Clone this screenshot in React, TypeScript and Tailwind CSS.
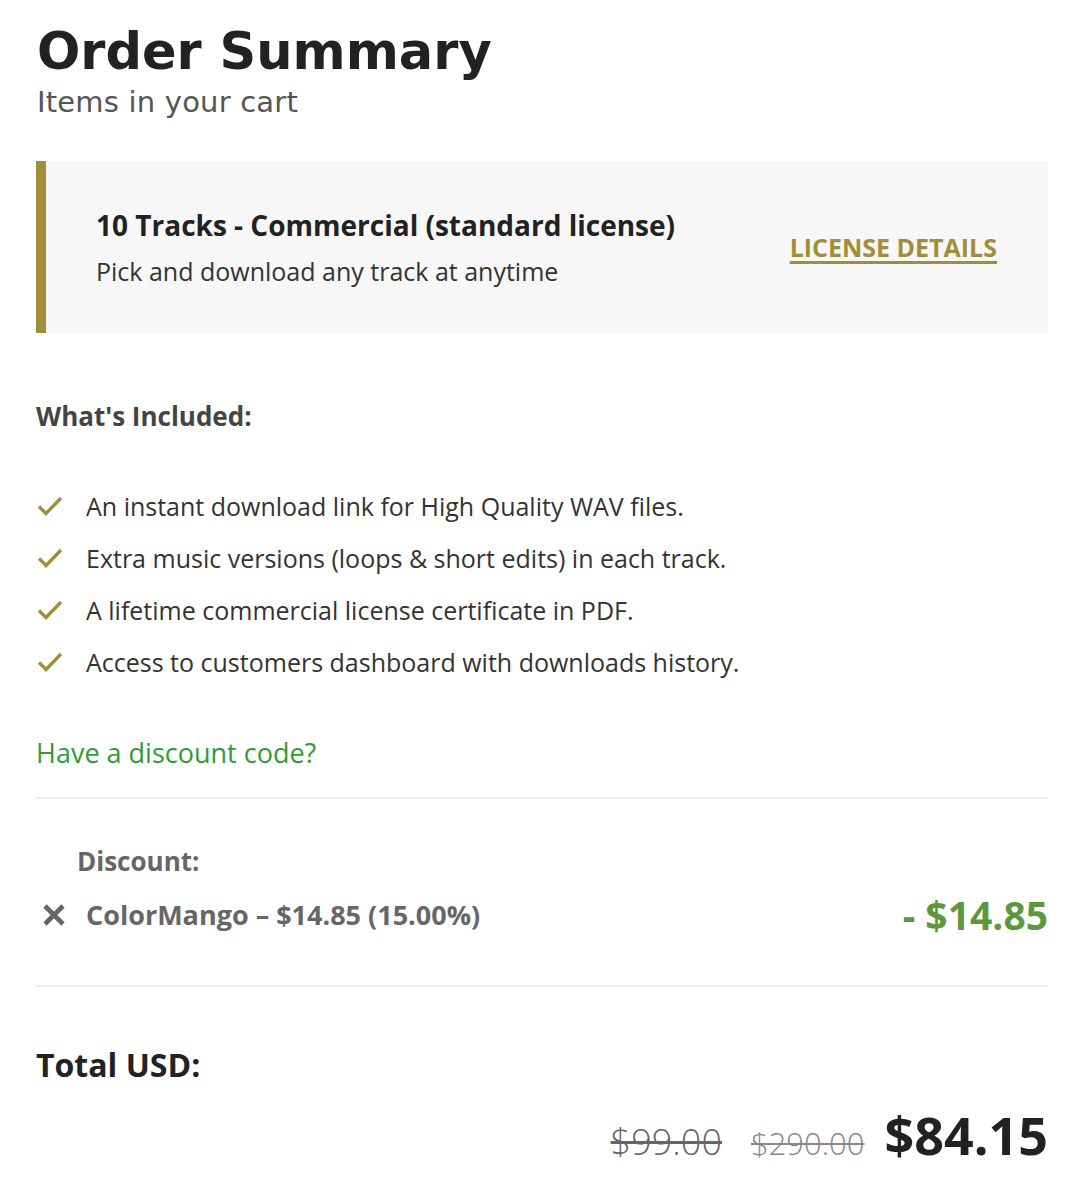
import React from 'react';

const features = [
    'An instant download link for High Quality WAV files.',
    'Extra music versions (loops & short edits) in each track.',
    'A lifetime commercial license certificate in PDF.',
    'Access to customers dashboard with downloads history.',
];

const Check = () => (
    <svg width="26" height="22" viewBox="0 0 26 22" fill="none" className="shrink-0">
        <path d="M2 11.5l7 7L24 3" stroke="#a08f3a" strokeWidth="3.4" strokeLinecap="butt" strokeLinejoin="miter" />
    </svg>
);

const Cross = () => (
    <svg width="24" height="24" viewBox="0 0 24 24" fill="none" className="shrink-0">
        <path d="M3 3l18 18M21 3L3 21" stroke="#666" strokeWidth="4.6" />
    </svg>
);

export default function App() {
    return (
        <div className="w-full bg-white text-[#222] pl-[36px] pr-[38px] pt-[22px] pb-10 font-['Open_Sans',sans-serif]">
            <div className="pl-[1px]">
                <h1 className="font-['DejaVu_Sans',sans-serif] font-bold text-[51px] leading-[60px] text-[#222]">Order Summary</h1>
                <p className="font-['DejaVu_Sans',sans-serif] text-[29px] leading-[36px] tracking-[0.2px] text-[#555] mt-[2px]">Items in your cart</p>
            </div>

            <div className="mt-[41px] h-[172px] bg-[#f7f7f7] border-l-[10px] border-[#a08f3a] flex items-center justify-between pl-[50px] pr-[51px]">
                <div className="flex flex-col">
                    <span className="font-bold text-[28px] leading-[36px] text-[#222]">10 Tracks - Commercial (standard license)</span>
                    <span className="text-[25px] leading-[32px] text-[#333] mt-[12px]">Pick and download any track at anytime</span>
                </div>
                <a className="font-bold text-[25px] leading-[30px] text-[#a08f3a] underline decoration-[3px] underline-offset-[4px]">LICENSE DETAILS</a>
            </div>

            <h2 className="mt-[66px] font-bold text-[26px] leading-[34px] text-[#444]">What's Included:</h2>

            <ul className="mt-[57px] flex flex-col gap-[20px]">
                {features.map((f) => (
                    <li key={f} className="flex items-center gap-[23px] pl-[1px] text-[25px] leading-[32px] text-[#333]">
                        <Check />
                        <span>{f}</span>
                    </li>
                ))}
            </ul>

            <p className="mt-[58px] text-[27px] leading-[34px] text-[#2e9c35]">Have a discount code?</p>

            <div className="mt-[27px] border-t-2 border-[#ececec]"></div>

            <div className="pt-[45px] pb-[47px]">
                <div className="pl-[41px] font-bold text-[26px] leading-[34px] text-[#666]">Discount:</div>
                <div className="mt-[14px] flex items-center justify-between">
                    <div className="flex items-center gap-[20px] pl-[6px]">
                        <Cross />
                        <span className="font-bold text-[27px] leading-[36px] text-[#666]">ColorMango – $14.85 (15.00%)</span>
                    </div>
                    <span className="font-bold text-[39px] leading-[46px] text-[#5f9640]">- $14.85</span>
                </div>
            </div>

            <div className="border-t-2 border-[#ececec]"></div>

            <div className="mt-[58px] font-bold text-[32px] leading-[40px] text-[#222]">Total USD:</div>

            <div className="mt-[20px] flex items-baseline justify-end">
                <span className="font-light text-[36px] leading-[44px] text-[#666] line-through decoration-[3px]">$99.00</span>
                <span className="ml-[29px] font-light text-[31px] leading-[36px] text-[#888] line-through decoration-[2px]">$290.00</span>
                <span className="ml-[20px] font-bold text-[52px] leading-[60px] text-[#222]">$84.15</span>
            </div>
        </div>
    );
}
